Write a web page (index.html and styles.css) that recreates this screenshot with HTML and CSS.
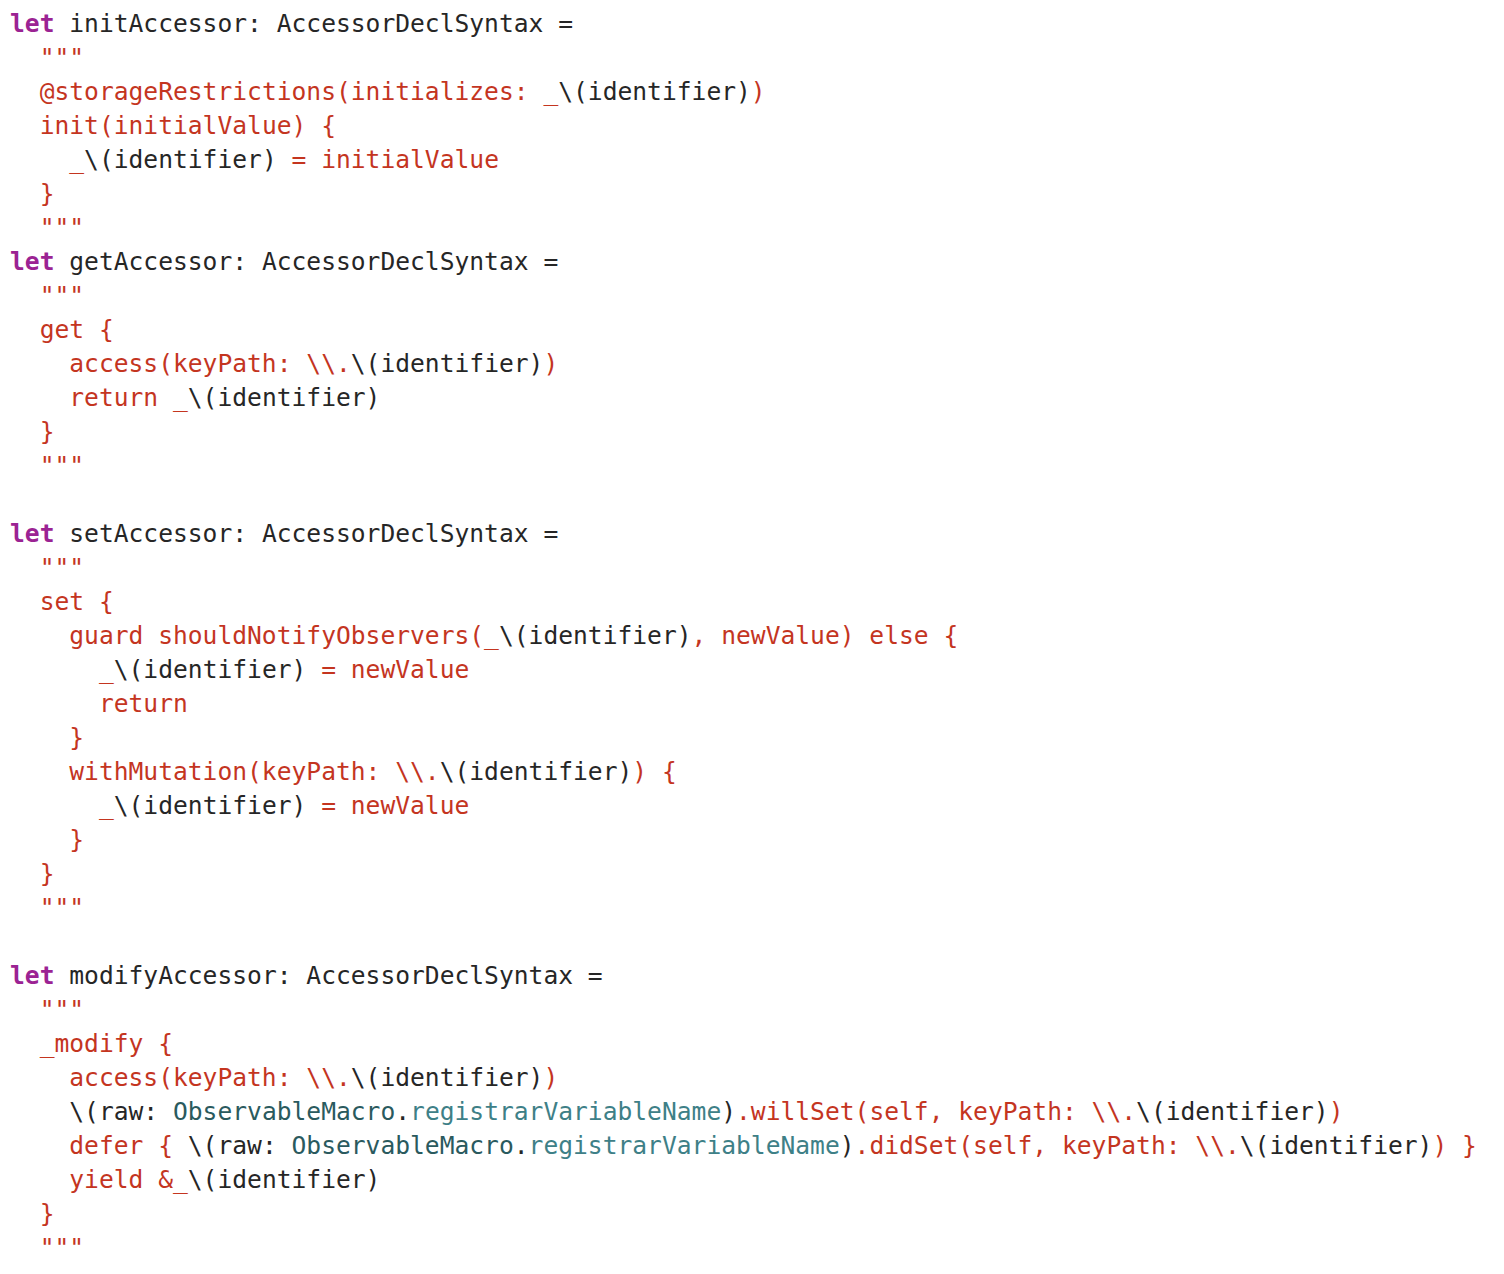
FILE: index.html
```html
<!DOCTYPE html>
<html>
<head>
<meta charset="utf-8">
<link rel="stylesheet" href="styles.css">
</head>
<body>
<pre class="code"><span class="kw">let</span> initAccessor: AccessorDeclSyntax =
  <span class="str">"""</span>
  <span class="str">@storageRestrictions(initializes: _</span>\(identifier)<span class="str">)</span>
  <span class="str">init(initialValue) {</span>
    <span class="str">_</span>\(identifier)<span class="str"> = initialValue</span>
  <span class="str">}</span>
  <span class="str">"""</span>
<span class="kw">let</span> getAccessor: AccessorDeclSyntax =
  <span class="str">"""</span>
  <span class="str">get {</span>
    <span class="str">access(keyPath: \\.</span>\(identifier)<span class="str">)</span>
    <span class="str">return _</span>\(identifier)
  <span class="str">}</span>
  <span class="str">"""</span>

<span class="kw">let</span> setAccessor: AccessorDeclSyntax =
  <span class="str">"""</span>
  <span class="str">set {</span>
    <span class="str">guard shouldNotifyObservers(_</span>\(identifier)<span class="str">, newValue) else {</span>
      <span class="str">_</span>\(identifier)<span class="str"> = newValue</span>
      <span class="str">return</span>
    <span class="str">}</span>
    <span class="str">withMutation(keyPath: \\.</span>\(identifier)<span class="str">) {</span>
      <span class="str">_</span>\(identifier)<span class="str"> = newValue</span>
    <span class="str">}</span>
  <span class="str">}</span>
  <span class="str">"""</span>

<span class="kw">let</span> modifyAccessor: AccessorDeclSyntax =
  <span class="str">"""</span>
  <span class="str">_modify {</span>
    <span class="str">access(keyPath: \\.</span>\(identifier)<span class="str">)</span>
    \(raw: <span class="cls">ObservableMacro</span>.<span class="prop">registrarVariableName</span>)<span class="str">.willSet(self, keyPath: \\.</span>\(identifier)<span class="str">)</span>
    <span class="str">defer { </span>\(raw: <span class="cls">ObservableMacro</span>.<span class="prop">registrarVariableName</span>)<span class="str">.didSet(self, keyPath: \\.</span>\(identifier)<span class="str">) }</span>
    <span class="str">yield &amp;_</span>\(identifier)
  <span class="str">}</span>
  <span class="str">"""</span></pre>
</body>
</html>
```

FILE: styles.css
```css
html, body {
  margin: 0;
  padding: 0;
  background: #ffffff;
}

.code {
  margin: 0;
  padding: 7px 0 0 10px;
  font-family: "DejaVu Sans Mono", "Liberation Mono", monospace;
  font-size: 24.62px;
  line-height: 34px;
  color: #262626;
  white-space: pre;
}

.kw {
  color: #9b2393;
  font-weight: 600;
}

.str {
  color: #c4351f;
}

.cls {
  color: #2a5a5e;
}

.prop {
  color: #3e8087;
}
```
